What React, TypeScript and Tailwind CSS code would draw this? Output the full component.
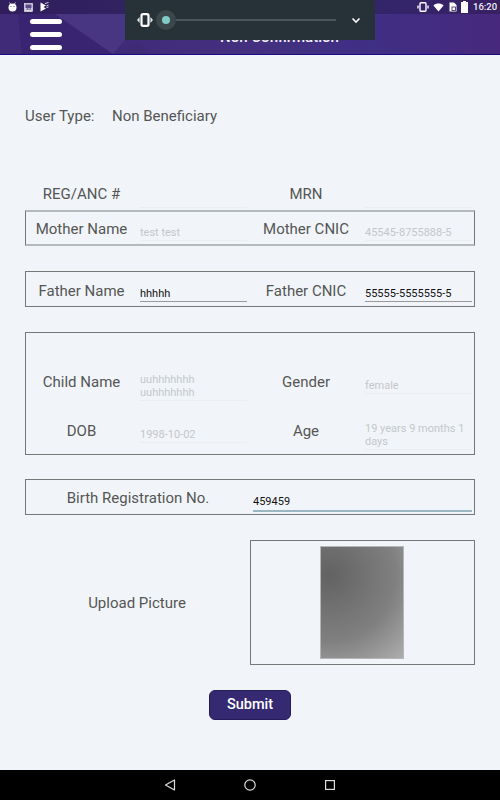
const labelText = "text-[15px] leading-[18px] text-[#555] text-center";

function Label({ children, className = "" }: { children: React.ReactNode; className?: string }) {
  return <div className={`${labelText} ${className}`}>{children}</div>;
}

function Field({ value, dark, active, className = "" }: { value?: string; dark?: boolean; active?: boolean; className?: string }) {
  return (
    <div
      className={`flex flex-col justify-end text-[11px] leading-[13px] ${
        dark ? "text-[#111]" : "text-[#c4c7ca]"
      } ${active ? "border-b-2 border-[#9ab6c2]" : dark ? "border-b border-[#999]" : "border-b border-[#ebeef1]"} ${className}`}
    >
      {value}
    </div>
  );
}

function Row({ a, aVal, b, bVal, dark }: { a: string; aVal: string; b: string; bVal: string; dark?: boolean }) {
  const nudge = dark ? "mt-[4px]" : "mt-[2px]";
  return (
    <div className="flex items-center">
      <Label className={`w-[111px] ${nudge}`}>{a}</Label>
      <Field value={aVal} dark={dark} className="w-[107px] ml-[3px] pb-[1px] min-h-[20px] mt-[6px]" />
      <Label className={`w-[118px] ${nudge}`}>{b}</Label>
      <Field value={bVal} dark={dark} className="w-[107px] pb-[1px] min-h-[20px] mt-[6px]" />
    </div>
  );
}

function StatusBar() {
  return (
    <div className="h-[14px] bg-black/20 flex items-center justify-between pl-[8px] pr-[5px]">
      <div className="flex items-center gap-[7px]">
        <svg width="9" height="10" viewBox="0 0 9 10" fill="#fff">
          <circle cx="4.5" cy="5.5" r="4" />
          <path d="M1.5 0.5 L3 2.5 M7.5 0.5 L6 2.5" stroke="#fff" strokeWidth="0.8" />
          <circle cx="3" cy="4.5" r="0.6" fill="#4a3680" />
          <circle cx="6" cy="4.5" r="0.6" fill="#4a3680" />
        </svg>
        <svg width="9" height="9" viewBox="0 0 9 9">
          <rect x="0.5" y="0.5" width="8" height="8" fill="#d9d6e6" stroke="#eee" strokeWidth="0.6" />
          <rect x="1.5" y="1.5" width="6" height="3.5" fill="#5b4a8c" />
          <path d="M1.5 6.5 L3.5 5 L5 6 L6.5 5 L7.5 6.5 Z" fill="#5b4a8c" />
        </svg>
        <svg width="9" height="10" viewBox="0 0 9 10" fill="#fff">
          <path d="M0.5 0.5 L6 3.5 L3.5 5 L6 6.5 L0.5 9.5 Z" />
          <path d="M5 1.5 L8.5 0.5 M6.5 4 L8.5 3 M6.5 5.5 L8.5 5" stroke="#fff" strokeWidth="0.8" />
        </svg>
      </div>
      <div className="flex items-center">
        <svg width="12" height="10" viewBox="0 0 12 10" fill="none" className="mr-[4px]">
          <rect x="3" y="0.7" width="6" height="8.6" rx="1" stroke="#fff" strokeWidth="1.4" />
          <path d="M1 3.5 V6.5 M11 3.5 V6.5" stroke="#e3e0ee" strokeWidth="1.6" />
        </svg>
        <svg width="11" height="9" viewBox="0 0 13 10" fill="#fff" className="mr-[5px]">
          <path d="M0.5 2.5 C4 -0.6 9 -0.6 12.5 2.5 L6.5 9.8 Z" />
        </svg>
        <svg width="8" height="10" viewBox="0 0 8 10" className="mr-[4px]">
          <path d="M0.5 0.5 H5 L7.5 3 V9.5 H0.5 Z" fill="#fff" />
          <rect x="3" y="5" width="3.5" height="3.5" fill="none" stroke="#4a3680" strokeWidth="0.9" />
        </svg>
        <svg width="7" height="12" viewBox="0 0 7 12" fill="#fff" className="mr-[5px]">
          <path d="M2 0 H5 V1 H7 V12 H0 V1 H2 Z" />
        </svg>
        <span className="w-[22px] text-[9.5px] leading-[14px] font-medium text-[#f2f0f7] whitespace-nowrap">16:20</span>
      </div>
    </div>
  );
}

function Header() {
  return (
    <div className="relative h-[55px] border-b border-[#1c0a8a] bg-[linear-gradient(90deg,#3c2674_0%,#43307f_50%,#3f2f85_75%,#47287c_100%)] overflow-hidden">
      {/* faceted background */}
      <svg className="absolute inset-0" width="500" height="54" viewBox="0 0 500 54">
        <path d="M0 14 L55 14 L113 54 L0 54 Z" fill="#382470" />
        <path d="M0 14 L18 14 L22 54 L0 54 Z" fill="#3f2b78" />
        <path d="M55 14 L125 14 L125 40 L113 54 Z" fill="#483682" />
        <path d="M113 54 L140 42 L150 54 Z" fill="#3d2b76" />
      </svg>
      <div className="relative">
        <StatusBar />
        <div className="pl-[30px] pt-[5px] flex flex-col gap-[8px]">
          <div className="w-[32px] h-[5px] rounded-full bg-white" />
          <div className="w-[32px] h-[5px] rounded-full bg-white" />
          <div className="w-[32px] h-[5px] rounded-full bg-white" />
        </div>
      </div>
      <div className="absolute left-[220px] top-[28px] w-[119px] text-center text-[15px] leading-[18px] font-medium text-[#f2f1f7] whitespace-nowrap">
        Non Confirmation
      </div>
    </div>
  );
}

function VolumePanel() {
  return (
    <div className="absolute left-[125px] top-0 w-[250px] h-[40px] bg-[#263238] flex items-center">
      <svg width="16" height="14" viewBox="0 0 16 14" fill="none" className="ml-[12px]">
        <rect x="4.5" y="1.2" width="7" height="11.6" rx="1.5" stroke="#fff" strokeWidth="2.2" fill="#263238" />
        <path d="M0 7 L2.6 4 V10 Z M16 7 L13.4 4 V10 Z" fill="#e5e8e9" />
      </svg>
      <div className="relative ml-[3px] w-[20px] h-[20px] rounded-full bg-white/10 flex items-center justify-center">
        <div className="w-[8px] h-[8px] rounded-full bg-[#80cbc4]" />
      </div>
      <div className="h-[2px] w-[160px] bg-[#4a565b]" />
      <svg width="10" height="7" viewBox="0 0 10 7" fill="none" className="ml-[15px]">
        <path d="M1.5 1.5 L5 5 L8.5 1.5" stroke="#fff" strokeWidth="1.6" />
      </svg>
    </div>
  );
}

function NavBar() {
  return (
    <div className="h-[30px] bg-black flex items-center justify-center gap-[68px]">
      <svg width="12" height="12" viewBox="0 0 12 12" fill="none">
        <path d="M10.5 1 V11 L1.5 6 Z" stroke="#ddd" strokeWidth="1.2" strokeLinejoin="round" />
      </svg>
      <svg width="12" height="12" viewBox="0 0 12 12" fill="none">
        <circle cx="6" cy="6" r="5.2" stroke="#ddd" strokeWidth="1.2" />
      </svg>
      <svg width="12" height="12" viewBox="0 0 12 12" fill="none">
        <rect x="1.6" y="1.6" width="8.8" height="8.8" stroke="#ddd" strokeWidth="1.2" />
      </svg>
    </div>
  );
}

export default function App() {
  return (
    <div className="relative w-[500px] h-[800px] flex flex-col bg-[#f1f5f9] font-['Roboto',sans-serif] overflow-hidden">
      <Header />
      <VolumePanel />

      <main className="flex-1 px-[25px]">
        <div className="flex items-center mt-[52px] h-[18px] text-[15px] text-[#555]">
          <span className="w-[87px]">User Type:</span>
          <span>Non Beneficiary</span>
        </div>

        <div className="flex items-center mt-[60px] px-[1px] h-[22px]">
          <Label className="w-[111px] -mt-[4px]">REG/ANC #</Label>
          <Field className="w-[107px] ml-[3px] h-[22px] mt-[2px]" />
          <Label className="w-[118px] -mt-[4px]">MRN</Label>
          <Field className="w-[107px] h-[22px] mt-[2px]" />
        </div>

        <div className="mt-[3px] h-[36px] border border-y-2 border-x-[#777] border-y-[#b4b9bc] flex items-center">
          <Row a="Mother Name" aVal="test test" b="Mother CNIC" bVal="45545-8755888-5" />
        </div>

        <div className="mt-[25px] h-[36px] border border-[#777] flex items-center">
          <Row a="Father Name" aVal="hhhhh" b="Father CNIC" bVal="55555-5555555-5" dark />
        </div>

        <div className="mt-[25px] h-[123px] border border-[#777] pt-[24px]">
          <div className="flex items-center h-[49px]">
            <Label className="w-[111px]">Child Name</Label>
            <Field value="uuhhhhhhh uuhhhhhhh" className="self-end mb-[5px] w-[107px] ml-[3px] pr-[45px] pb-[1px]" />
            <Label className="w-[118px]">Gender</Label>
            <Field value="female" className="self-end mb-[12px] w-[107px] pb-[1px]" />
          </div>
          <div className="flex items-center h-[48px]">
            <Label className="w-[111px] mt-[2px]">DOB</Label>
            <Field value="1998-10-02" className="self-end mb-[11px] w-[107px] ml-[3px] pb-[1px]" />
            <Label className="w-[118px] mt-[2px]">Age</Label>
            <Field value="19 years 9 months 1 days" className="self-end mb-[4px] w-[107px] pb-[1px]" />
          </div>
        </div>

        <div className="mt-[24px] h-[36px] border border-[#777] flex items-center">
          <Label className="w-[224px] mt-[2px]">Birth Registration No.</Label>
          <Field value="459459" dark active className="w-[219px] ml-[3px] pb-[2px] min-h-[20px] mt-[10px]" />
        </div>

        <div className="mt-[25px] flex items-center">
          <Label className="w-[224px] mr-[1px]">Upload Picture</Label>
          <div className="w-[225px] h-[125px] border border-[#777] flex items-center justify-center">
            <div className="w-[84px] h-[113px] mr-[2px] border border-[#b4b7b9] bg-[radial-gradient(circle_at_10%_25%,#626262_0%,#808080_60%,#b8b8b8_110%)]" />
          </div>
        </div>

        <div className="mt-[25px] flex justify-center">
          <button className="w-[82px] h-[30px] rounded-[6px] border border-[#261c5c] bg-[#352a72] text-white text-[14.5px] font-medium">
            Submit
          </button>
        </div>
      </main>

      <NavBar />
    </div>
  );
}
